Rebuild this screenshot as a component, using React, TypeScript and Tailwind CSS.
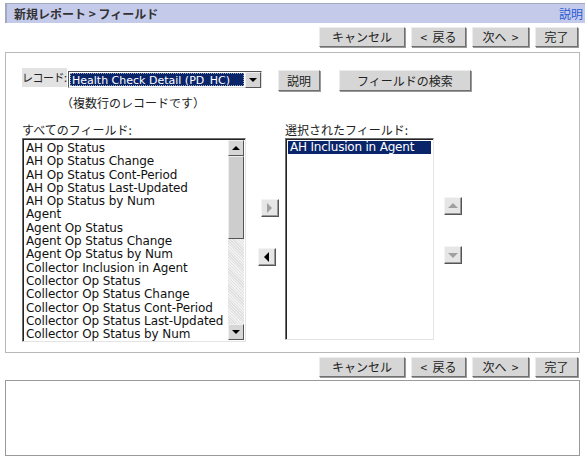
import React from 'react';

const jp = "font-['MS_UI_Gothic','Noto_Sans_CJK_JP',sans-serif]";
const latin = "font-['DejaVu_Sans','Noto_Sans_CJK_JP',sans-serif]";

const allFields = [
  'AH Op Status',
  'AH Op Status Change',
  'AH Op Status Cont-Period',
  'AH Op Status Last-Updated',
  'AH Op Status by Num',
  'Agent',
  'Agent Op Status',
  'Agent Op Status Change',
  'Agent Op Status by Num',
  'Collector Inclusion in Agent',
  'Collector Op Status',
  'Collector Op Status Change',
  'Collector Op Status Cont-Period',
  'Collector Op Status Last-Updated',
  'Collector Op Status by Num',
];

function Btn({ label, w, h = 'h-[20px]' }: { label: string; w: string; h?: string }) {
  return (
    <button
      className={`${w} ${h} ${jp} text-[12px] text-[#222] bg-[#d6d6d6] border border-t-[#ececec] border-l-[#ececec] border-r-[#707070] border-b-[#707070] shadow-[1px_1px_0_#9a9a9a] flex items-center justify-center whitespace-pre`}
    >
      {label}
    </button>
  );
}

function NavButtons() {
  return (
    <div className="flex justify-end gap-[6px] pr-[7px]">
      <Btn label="キャンセル" w="w-[86px]" />
      <Btn label="<  戻る" w="w-[55px]" />
      <Btn label="次へ  >" w="w-[57px]" />
      <Btn label="完了" w="w-[43px]" />
    </div>
  );
}

function ArrowBtn({ dir, disabled }: { dir: 'left' | 'right' | 'up' | 'down'; disabled?: boolean }) {
  const fill = disabled ? '#a0a0a0' : '#000';
  const pts = {
    right: '6,4 11,9 6,14',
    left: '11,4 6,9 11,14',
    up: '4,11 9,6 14,11',
    down: '4,7 9,12 14,7',
  }[dir];
  return (
    <div className="w-[18px] h-[18px] bg-[#e6e6e6] border border-t-[#f4f4f4] border-l-[#f4f4f4] border-r-[#555] border-b-[#555] shadow-[inset_-1px_-1px_0_#9a9a9a]">
      <svg width="16" height="16" viewBox="1 1 16 16">
        <polygon points={pts} fill={fill} />
      </svg>
    </div>
  );
}

function ScrollArrow({ up }: { up?: boolean }) {
  return (
    <div className="w-[16px] h-[16px] shrink-0 bg-[#d6d6d6] border border-t-[#f0f0f0] border-l-[#f0f0f0] border-r-[#555] border-b-[#555] flex items-center justify-center">
      <svg width="8" height="6" viewBox="0 0 8 6">
        <polygon points={up ? '0,5 4,1 8,5' : '0,1 4,5 8,1'} fill="#000" />
      </svg>
    </div>
  );
}

export default function App() {
  return (
    <div className="w-[585px] h-[463px] bg-white pl-[5px] pt-[3px] overflow-hidden">
      {/* Title bar */}
      <div className="h-[20px] bg-[#c4cae9] border-l-2 border-t border-[#a4a8bc] flex items-center justify-between pl-[7px] pr-[2px]">
        <span className={`${jp} text-[12px] font-bold text-[#333] whitespace-pre`}>新規レポート &gt; フィールド</span>
        <span className={`${jp} text-[12px] text-[#2a5bd7]`}>説明</span>
      </div>

      <div className="mt-[4px]">
        <NavButtons />
      </div>

      {/* Main panel */}
      <div className="mt-[5px] w-[575px] h-[301px] border border-[#b8b8b8] pl-[16px] pt-[15px]">
        <div className="flex items-start">
          <div className={`${jp} w-[45px] h-[19px] bg-[#e2e2e2] text-[11px] tracking-[-0.5px] whitespace-nowrap text-[#222] pt-[1px]`}>
            レコード:
          </div>
          <div className="flex flex-col">
            <div className="ml-[1px] mt-[3px] w-[194px] h-[17px] flex border border-t-[#555] border-l-[#555] border-r-[#ddd] border-b-[#ddd] bg-white">
              <div className={`${latin} flex-1 m-[1px] bg-[#0a246a] text-white text-[11px] leading-[13px] px-[1px] border border-dotted border-[#9ab] whitespace-nowrap overflow-hidden`}>
                Health Check Detail (PD_HC)
              </div>
              <ScrollArrow />
            </div>
            <div className={`${jp} text-[12px] text-[#222] mt-[6px] -ml-[6px]`}>（複数行のレコードです）</div>
          </div>
          <div className="ml-[16px] mt-[2px]">
            <Btn label="説明" w="w-[42px]" h="h-[21px]" />
          </div>
          <div className="ml-[19px] mt-[2px]">
            <Btn label="フィールドの検索" w="w-[132px]" h="h-[21px]" />
          </div>
        </div>

        {/* Field lists */}
        <div className="mt-[11px] flex items-start">
          <div className="flex flex-col">
            <div className={`${jp} text-[12px] text-[#222] leading-[13px] mb-[2px]`}>すべてのフィールド:</div>
            <div className="w-[224px] h-[204px] flex border border-t-[#707070] border-l-[#707070] border-r-[#e4e4e4] border-b-[#e4e4e4] shadow-[inset_1px_1px_0_#222]">
              <div className={`${latin} flex-1 pl-[3px] pt-[3px] text-[12px] tracking-[-0.1px] text-[#111] overflow-hidden`}>
                {allFields.map((f) => (
                  <div key={f} className="h-[13.3px] leading-[13.3px] whitespace-nowrap">
                    {f}
                  </div>
                ))}
              </div>
              <div className="w-[16px] mr-[1px] mt-[1px] mb-[1px] flex flex-col bg-[#e8e8e8] bg-[repeating-linear-gradient(45deg,#e0e0e0_0px,#e0e0e0_1px,#f2f2f2_1px,#f2f2f2_2px)]">
                <ScrollArrow up />
                <div className="h-[83px] bg-[#cdcdcd] border border-t-[#eee] border-l-[#eee] border-r-[#555] border-b-[#555]" />
                <div className="flex-1" />
                <ScrollArrow />
              </div>
            </div>
          </div>

          <div className="w-[39px] flex flex-col items-center pt-[76px]">
            <div className="ml-[8px]">
              <ArrowBtn dir="right" disabled />
            </div>
            <div className="mt-[31px] ml-[2px]">
              <ArrowBtn dir="left" />
            </div>
          </div>

          <div className="flex flex-col">
            <div className={`${jp} text-[12px] text-[#222] leading-[13px] mb-[2px]`}>選択されたフィールド:</div>
            <div className="w-[149px] h-[202px] border border-t-[#707070] border-l-[#707070] border-r-[#e4e4e4] border-b-[#e4e4e4] shadow-[inset_1px_1px_0_#222] p-[2px]">
              <div className={`${latin} bg-[#0a246a] text-white text-[12px] tracking-[-0.2px] h-[13px] leading-[13px] pl-[2px] whitespace-nowrap`}>
                AH Inclusion in Agent
              </div>
            </div>
          </div>

          <div className="ml-[10px] flex flex-col pt-[74px]">
            <ArrowBtn dir="up" disabled />
            <div className="mt-[31px]">
              <ArrowBtn dir="down" disabled />
            </div>
          </div>
        </div>
      </div>

      <div className="mt-[4px]">
        <NavButtons />
      </div>

      {/* Bottom panel */}
      <div className="mt-[3px] w-[575px] h-[76px] border border-[#9a9a9a]" />
    </div>
  );
}
